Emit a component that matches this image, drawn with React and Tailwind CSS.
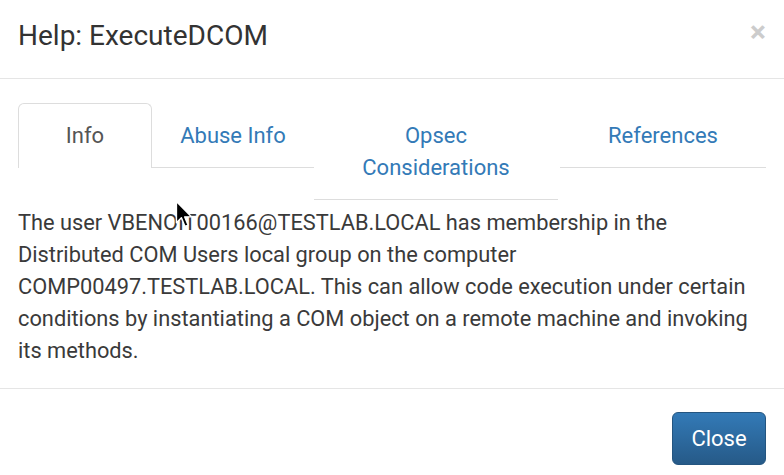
import React from "react";

const tabs = [
  { label: "Info", w: "w-[134px]", active: true },
  { label: "Abuse Info", w: "w-[162px]" },
  { label: "Opsec Considerations", w: "w-[244px]", lines: ["Opsec", "Considerations"] },
  { label: "References", w: "w-[206px] ml-[2px]" },
];

const lines = [
  "The user VBENOIT00166@TESTLAB.LOCAL has membership in the",
  "Distributed COM Users local group on the computer",
  "COMP00497.TESTLAB.LOCAL. This can allow code execution under certain",
  "conditions by instantiating a COM object on a remote machine and invoking",
  "its methods.",
];

// mouse pointer visible in the screenshot
const Cursor = () => (
  <svg className="absolute left-[175px] top-[200px]" width="20" height="30" viewBox="0 0 14 21">
    <path d="M1 1 L1 16 L4.5 12.5 L7 18.5 L9.2 17.6 L6.8 11.8 L11.5 11.8 Z" fill="#000" stroke="#fff" strokeWidth="1" strokeLinejoin="round" />
  </svg>
);

export default function App() {
  return (
    <div className="relative w-[784px] h-[475px] overflow-hidden bg-white text-[#333]" style={{ fontFamily: "Roboto, 'Liberation Sans', sans-serif" }}>
      {/* Header */}
      <div className="flex items-start justify-between px-[18px] pt-5 pb-[26px] border-b border-[#e5e5e5]">
        <h4 className="text-[28px] leading-[32px] text-[#333]">Help: ExecuteDCOM</h4>
        <button className="text-[30px] leading-[32px] font-bold text-[#cccccc] -mt-[4px]">×</button>
      </div>

      {/* Body */}
      <div className="px-[18px] pt-6 pb-[21px]">
        <ul className="flex items-start">
          {tabs.map((t) => (
            <li key={t.label} className={t.w}>
              {t.active ? (
                <div className="border border-b-0 border-[#ddd] rounded-t-[6px] pt-4 pb-4 text-center text-[22px] leading-[32px] text-[#555]">
                  {t.label}
                </div>
              ) : (
                <div className="border-b border-[#ddd] pt-[17px] pb-[15px] text-center text-[22px] leading-[32px] text-[#337ab7]">
                  {t.lines ? t.lines.map((l) => <div key={l}>{l}</div>) : t.label}
                </div>
              )}
            </li>
          ))}
        </ul>
        <p className="mt-[7px] text-[21.8px] leading-[32px] text-[#3a3a3a]">
          {lines.map((l) => (
            <span key={l} className="block whitespace-nowrap">{l}</span>
          ))}
        </p>
      </div>

      {/* Footer */}
      <div className="flex justify-end px-[18px] pt-[23px] border-t border-[#e5e5e5]">
        <button className="w-[94px] h-[53px] rounded-[6px] border border-[#245580] bg-gradient-to-b from-[#337ab7] to-[#265a88] text-white text-[22px] leading-[32px]">
          Close
        </button>
      </div>

      <Cursor />
    </div>
  );
}
